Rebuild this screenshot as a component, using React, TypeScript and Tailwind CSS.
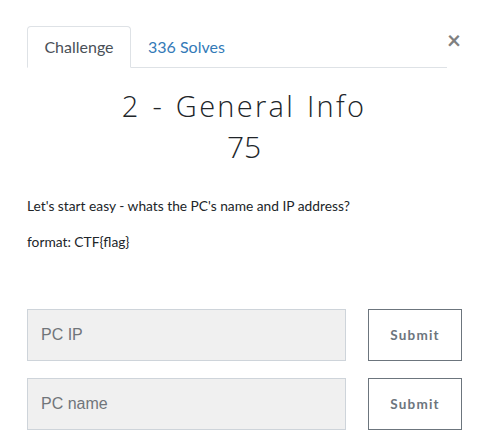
import React from "react";

export default function App() {
  return (
    <div className="w-[484px] h-[446px] bg-white font-['Lato','Noto_Sans',sans-serif] text-[#212529]">
      <div className="pt-[26px] pl-[27px] pr-[23px]">
        <div className="flex items-start">
          <div className="flex-1 flex border-b border-[#dee2e6]">
            <div className="w-[104px] h-[42px] -mb-px border border-[#dee2e6] border-b-white rounded-t-[4px] bg-white flex items-center justify-center text-[16px] text-[#495057]">
              Challenge
            </div>
            <div className="h-[41px] px-[17px] flex items-center text-[16px] text-[#337ab7]">
              336 Solves
            </div>
          </div>
          <div className="w-[14px] mt-[2px] text-[24px] leading-[24px] font-bold text-[#808080] text-left">
            ×
          </div>
        </div>
        <div className="mt-[18px] text-center font-['Open_Sans',sans-serif] font-light text-[29px] leading-[40px] tracking-[2.3px] [word-spacing:2px] text-[#212529]">
          2 - General Info
        </div>
        <div className="mt-[1px] text-center font-['Open_Sans',sans-serif] font-light text-[30px] leading-[40px] text-[#212529]">
          75
        </div>
        <div className="mt-[29px] text-[13.75px] leading-[20px] text-[#212529]">
          Let's start easy - whats the PC's name and IP address?
        </div>
        <div className="mt-[16px] text-[13.75px] leading-[20px] text-[#212529]">
          format: CTF{"{flag}"}
        </div>
        <div className="mt-[57px] flex flex-col gap-[17px]">
          {["PC IP", "PC name"].map((p) => (
            <div key={p} className="flex items-center">
              <input
                placeholder={p}
                className="w-[319px] h-[52px] shrink-0 bg-[#f0f0f0] border border-[#ced4da] px-[13px] text-[16px] font-['Liberation_Sans',Arial,sans-serif] placeholder:text-[#70757a] outline-none"
              />
              <button className="ml-[22px] w-[94px] h-[52px] shrink-0 border border-[#6c757d] bg-white text-[13.5px] font-bold tracking-[1.2px] text-[#6c757d]">
                Submit
              </button>
            </div>
          ))}
        </div>
      </div>
    </div>
  );
}
